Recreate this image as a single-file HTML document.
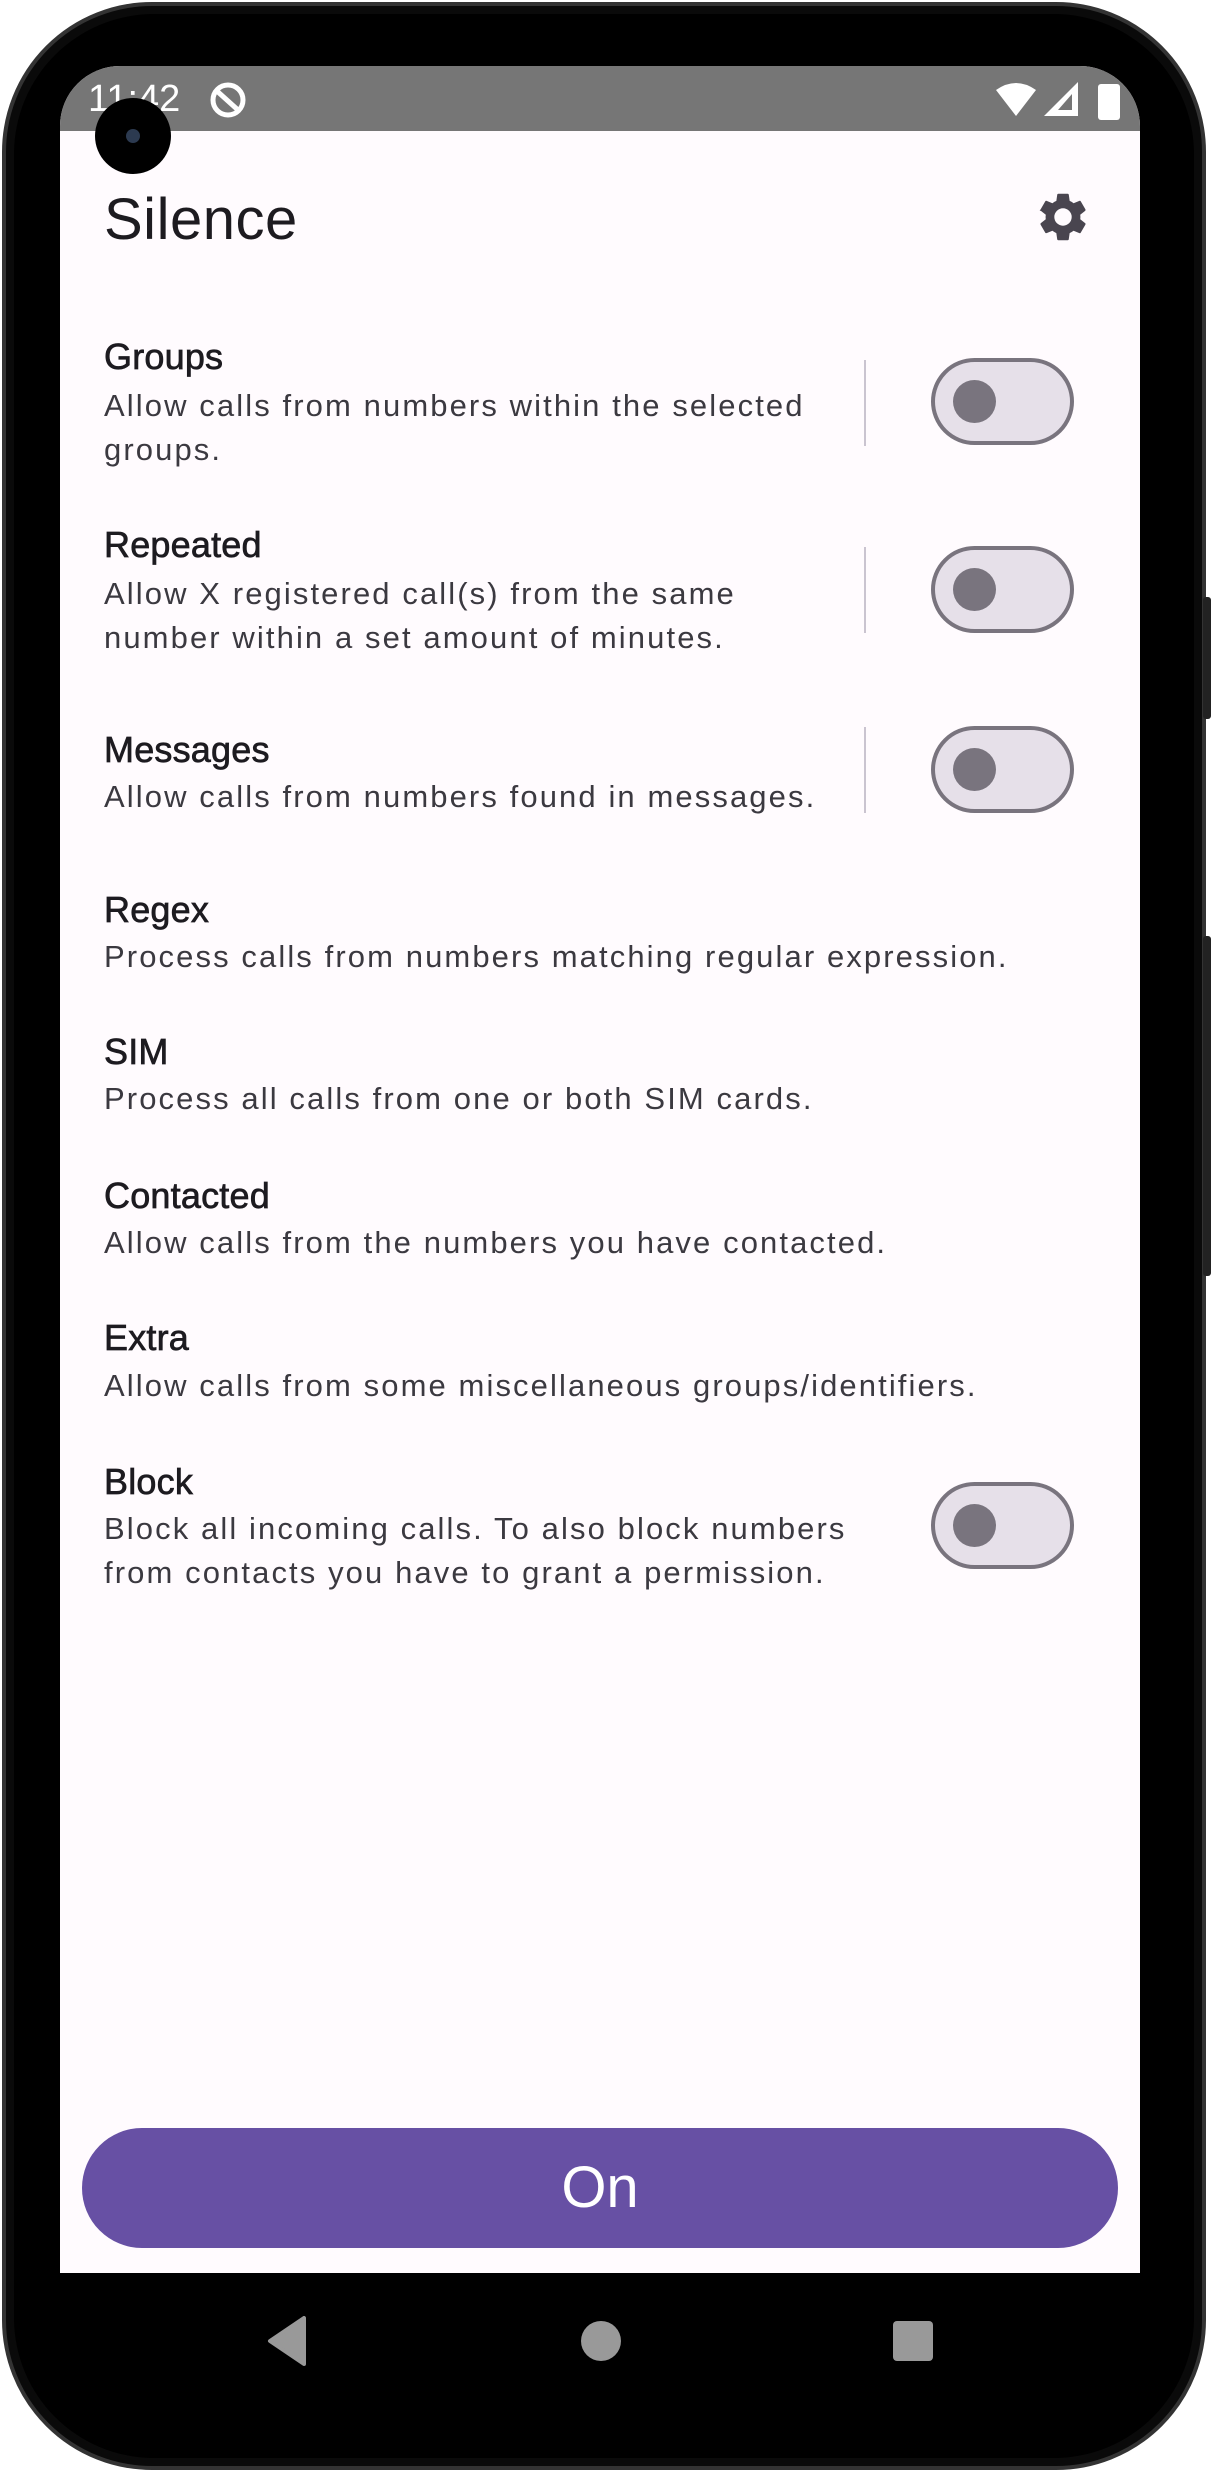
<!DOCTYPE html>
<html><head><meta charset="utf-8"><style>
*{margin:0;padding:0;box-sizing:border-box}
body{width:1211px;height:2474px;background:#fff;position:relative;overflow:hidden;font-family:"Liberation Sans",sans-serif}
.phone{position:absolute;left:2px;top:2px;width:1204px;height:2468px;background:#0a0a0a;border-radius:150px;border:4px solid #333}
.phone2{position:absolute;left:14px;top:14px;width:1180px;height:2444px;background:#000;border-radius:140px}
.btn{position:absolute;right:0;width:8px;background:#222;border-radius:3px}
.screen{position:absolute;left:60px;top:66px;width:1080px;height:2207px;background:#fffbfe;border-radius:60px 60px 0 0;overflow:hidden}
.status{position:absolute;left:0;top:0;width:1083px;height:65px;background:#767676}
.t{position:absolute;left:44px;color:#1d1b20;font-size:36px;letter-spacing:.2px;-webkit-text-stroke:0.7px #1d1b20}
.d{position:absolute;left:44px;color:#3b3940;font-size:31px;line-height:44px;letter-spacing:2.1px}
.sw{position:absolute;left:871px;width:143px;height:87px;border:4px solid #79747e;border-radius:44px;background:#e6e0e9}
.sw::after{content:"";position:absolute;left:18px;top:18px;width:43px;height:43px;border-radius:50%;background:#79747e}
.div{position:absolute;left:804px;width:2px;height:86px;background:#cac4d0}
</style></head><body>
<div class="phone"></div>
<div class="phone2"></div>
<div class="btn" style="top:597px;height:122px"></div>
<div class="btn" style="top:936px;height:340px"></div>
<div class="screen">
 <div class="status">
  <div style="position:absolute;left:28px;top:12px;color:#fff;font-size:38px">11:42</div>
  <svg style="position:absolute;left:148px;top:14px" width="40" height="40" viewBox="0 0 40 40"><circle cx="20" cy="20" r="15" fill="none" stroke="#fff" stroke-width="5"/><path d="M10 12 L30 30" stroke="#fff" stroke-width="5"/></svg>
  <svg style="position:absolute;left:936px;top:16px" width="40" height="34" viewBox="0 0 40 34"><path d="M0 8 Q20 -6 40 8 L20 34Z" fill="#fff"/></svg>
  <svg style="position:absolute;left:984px;top:16px" width="36" height="34" viewBox="0 0 36 34"><path d="M34 0 V34 H0Z" fill="#fff"/><path d="M28 12 V28 H14Z" fill="#767676"/></svg>
  <div style="position:absolute;left:1038px;top:18px;width:22px;height:36px;background:#fff;border-radius:3px"></div>
 </div>
 <div style="position:absolute;left:44px;top:120px;font-size:58px;color:#1d1b20;letter-spacing:.5px">Silence</div>
 <svg style="position:absolute;left:974px;top:122px" width="58" height="58" viewBox="0 0 24 24"><path fill="#49454f" d="M19.14 12.94c.04-.3.06-.61.06-.94 0-.32-.02-.64-.07-.94l2.03-1.58a.49.49 0 0 0 .12-.61l-1.92-3.32a.49.49 0 0 0-.59-.22l-2.39.96c-.5-.38-1.030-.7-1.62-.94l-.36-2.54a.48.48 0 0 0-.48-.41h-3.84c-.24 0-.43.17-.47.41l-.36 2.54c-.59.24-1.13.57-1.62.94l-2.39-.96a.49.49 0 0 0-.59.22L2.74 8.87c-.12.21-.8.47.12.61l2.03 1.58c-.05.3-.09.63-.09.94s.02.64.07.94l-2.03 1.58a.49.49 0 0 0-.12.61l1.92 3.32c.12.22.37.29.59.22l2.39-.96c.5.38 1.03.7 1.62.94l.36 2.54c.05.24.24.41.48.41h3.84c.24 0 .44-.17.47-.41l.36-2.54c.59-.24 1.13-.56 1.62-.94l2.39.96c.22.08.47 0 .59-.22l1.92-3.32c.12-.22.07-.47-.12-.61l-2.01-1.58zM12 15.6A3.6 3.6 0 1 1 12 8.4a3.6 3.6 0 0 1 0 7.2z"/></svg>

 <div class="t" style="top:270px">Groups</div>
 <div class="d" style="top:318px">Allow calls from numbers within the selected<br>groups.</div>
 <div class="div" style="top:294px"></div>
 <div class="sw" style="top:292px"></div>

 <div class="t" style="top:458px">Repeated</div>
 <div class="d" style="top:506px">Allow X registered call(s) from the same<br>number within a set amount of minutes.</div>
 <div class="div" style="top:481px"></div>
 <div class="sw" style="top:480px"></div>

 <div class="t" style="top:663px">Messages</div>
 <div class="d" style="top:709px">Allow calls from numbers found in messages.</div>
 <div class="div" style="top:661px"></div>
 <div class="sw" style="top:660px"></div>

 <div class="t" style="top:823px">Regex</div>
 <div class="d" style="top:869px">Process calls from numbers matching regular expression.</div>
 <div class="t" style="top:965px">SIM</div>
 <div class="d" style="top:1011px">Process all calls from one or both SIM cards.</div>
 <div class="t" style="top:1109px">Contacted</div>
 <div class="d" style="top:1155px">Allow calls from the numbers you have contacted.</div>
 <div class="t" style="top:1251px">Extra</div>
 <div class="d" style="top:1298px">Allow calls from some miscellaneous groups/identifiers.</div>
 <div class="t" style="top:1395px">Block</div>
 <div class="d" style="top:1441px">Block all incoming calls. To also block numbers<br>from contacts you have to grant a permission.</div>
 <div class="sw" style="top:1416px"></div>

 <div style="position:absolute;left:22px;top:2062px;width:1036px;height:120px;border-radius:60px;background:#6750a4;color:#fff;font-size:58px;text-align:center;line-height:120px">On</div>
</div>
<div style="position:absolute;left:95px;top:98px;width:76px;height:76px;border-radius:50%;background:#000"><div style="position:absolute;left:31px;top:31px;width:14px;height:14px;border-radius:50%;background:#2c3a50"></div></div>
<svg style="position:absolute;left:266px;top:2316px" width="40" height="50" viewBox="0 0 40 50"><path d="M38 2 L38 48 L4 25Z" fill="#999" stroke="#999" stroke-width="4" stroke-linejoin="round"/></svg>
<div style="position:absolute;left:581px;top:2321px;width:40px;height:40px;border-radius:50%;background:#999"></div>
<div style="position:absolute;left:893px;top:2321px;width:40px;height:40px;border-radius:4px;background:#999"></div>
</body></html>
